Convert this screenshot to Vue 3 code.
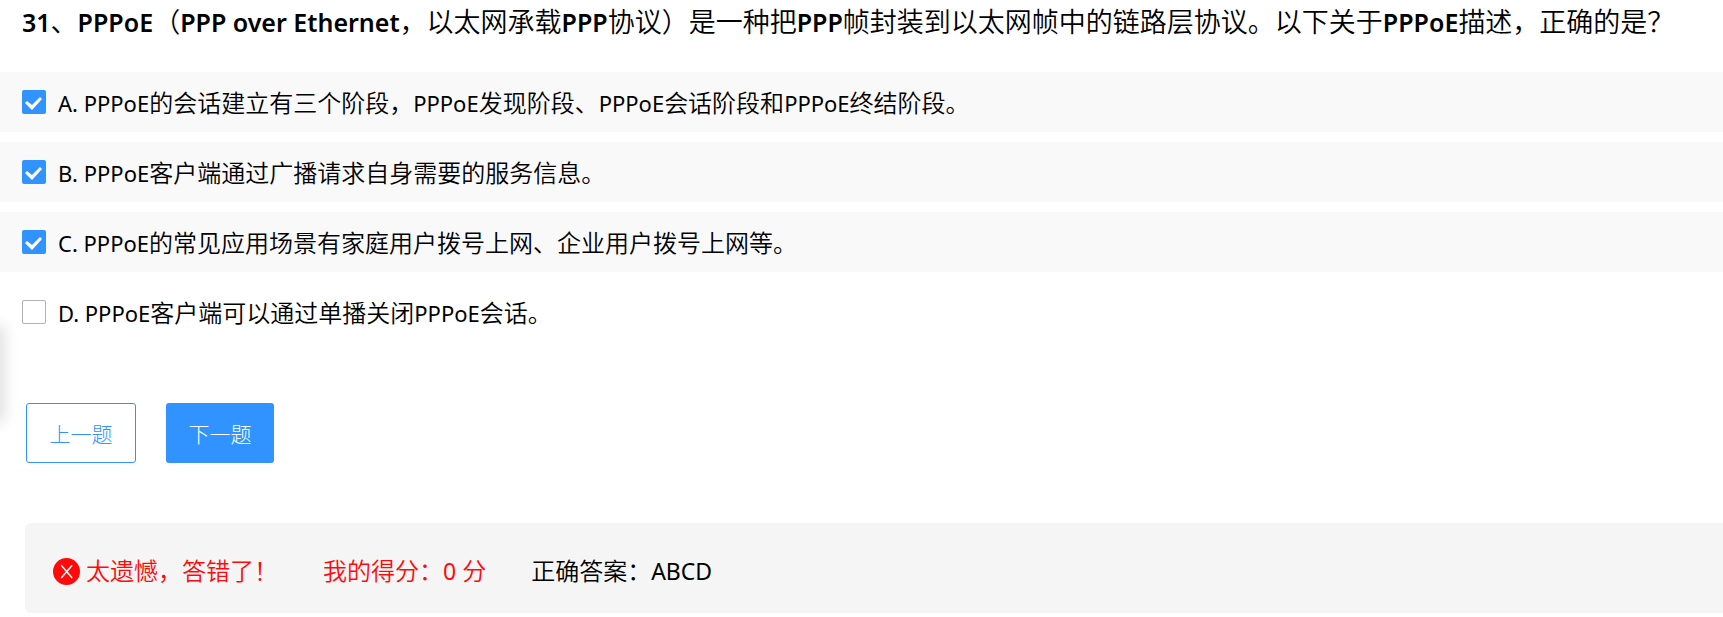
<script setup>
import { ref } from 'vue'

const title = '31、PPPoE（PPP over Ethernet，以太网承载PPP协议）是一种把PPP帧封装到以太网帧中的链路层协议。以下关于PPPoE描述，正确的是？'

const options = ref([
  { key: 'A', text: 'PPPoE的会话建立有三个阶段，PPPoE发现阶段、PPPoE会话阶段和PPPoE终结阶段。', checked: true },
  { key: 'B', text: 'PPPoE客户端通过广播请求自身需要的服务信息。', checked: true },
  { key: 'C', text: 'PPPoE的常见应用场景有家庭用户拨号上网、企业用户拨号上网等。', checked: true },
  { key: 'D', text: 'PPPoE客户端可以通过单播关闭PPPoE会话。', checked: false },
])

// Splits mixed text into Latin and Chinese runs so each can have its own type size
function runs(text) {
  return text.split(/([\x20-\x7e]+)/).filter(Boolean).map((t) => ({ t, latin: /^[\x20-\x7e]/.test(t) }))
}
</script>

<template>
  <main class="quiz">
    <div class="drawer" aria-hidden="true"></div>
    <h1 class="title"><span v-for="(r, i) in runs(title)" :key="i" :class="{ latin: r.latin }">{{ r.t }}</span></h1>

    <div class="options">
      <label v-for="o in options" :key="o.key" class="option" :class="{ selected: o.checked }" :for="'opt-' + o.key">
        <input :id="'opt-' + o.key" v-model="o.checked" type="checkbox" class="box" />
        <span class="text"><span v-for="(r, i) in runs(o.key + '. ' + o.text)" :key="i" :class="{ latin: r.latin }">{{ r.t }}</span></span>
      </label>
    </div>

    <div class="actions">
      <button type="button" class="btn prev">上一题</button>
      <button type="button" class="btn next">下一题</button>
    </div>

    <section class="result">
      <p class="verdict wrong">
        <svg class="icon" viewBox="0 0 27 27" aria-hidden="true">
          <circle cx="13.5" cy="13.5" r="13.5" fill="#ff0a0a" />
          <path d="M8.2 7.2 19.2 20M19.2 7.2 8.2 20" stroke="#fff" stroke-width="1.5" fill="none" />
        </svg>
        <span>太遗憾，答错了！</span>
      </p>
      <p class="wrong">我的得分：<span class="latin">0 </span>分</p>
      <p>正确答案：<span class="latin">ABCD</span></p>
    </section>
  </main>
</template>

<style>
body {
  margin: 0;
  background: #fff;
}
</style>

<style scoped>
.quiz {
  position: relative;
  overflow: hidden;
  padding-bottom: 4px;
  color: #000;
  font-family: "Noto Sans", "Noto Sans CJK SC", sans-serif;
  font-size: 24px;
  font-weight: 350;
}
.drawer {
  position: absolute;
  top: 325px;
  left: -20px;
  width: 20px;
  height: 98px;
  border-radius: 6px;
  box-shadow: 6px 0 14px rgba(0, 0, 0, 0.11);
}
.title {
  margin: 0 0 28px;
  padding: 0 22px;
  font-size: 27px;
  font-weight: 350;
  line-height: 44px;
}
.latin {
  font-size: 22px;
  font-weight: 400;
  white-space: pre-wrap;
}
.title .latin {
  font-size: 25px;
  font-weight: 600;
}
.result .latin {
  font-size: 23px;
}
.options {
  display: flex;
  flex-direction: column;
  gap: 10px;
}
.option {
  box-sizing: border-box;
  display: flex;
  align-items: center;
  gap: 12px;
  min-height: 60px;
  padding: 0 22px;
  line-height: 36px;
}
.text {
  padding-top: 2px;
}
.selected {
  background: #f9f9f9;
}
.box {
  appearance: none;
  flex: none;
  box-sizing: border-box;
  width: 24px;
  height: 24px;
  margin: 0;
  border: 1px solid #b2b2b2;
  border-radius: 2px;
  background: #fff;
}
.box:checked {
  border: 0;
  background: #3193ff;
}
.box:checked::before {
  content: "";
  display: block;
  width: 24px;
  height: 24px;
  background: #fff;
  clip-path: polygon(3px 13px, 5px 11px, 10px 15px, 18px 7px, 20px 9px, 10px 20px);
}
.actions {
  display: flex;
  gap: 30px;
  margin: 61px 26px 60px;
}
.btn {
  box-sizing: border-box;
  height: 60px;
  padding: 2px 22px 0;
  border: 0;
  border-radius: 3px;
  font-family: inherit;
  font-size: 21px;
  font-weight: 300;
  line-height: 30px;
}
.prev {
  min-width: 110px;
  border: 1px solid #3193ff;
  background: #fff;
  color: #3193ff;
}
.next {
  min-width: 108px;
  background: #3193ff;
  color: #fff;
}
.result {
  box-sizing: border-box;
  display: flex;
  align-items: center;
  gap: 45px;
  min-height: 90px;
  margin-left: 25px;
  padding: 6px 0 0 28px;
  border-radius: 6px 0 0 6px;
  background: #f5f5f5;
}
.result p {
  margin: 0;
  line-height: 36px;
}
.result .verdict {
  display: flex;
  align-items: center;
  gap: 6px;
}
.wrong {
  color: #ff0a0a;
}
.icon {
  width: 27px;
  height: 27px;
}
</style>
